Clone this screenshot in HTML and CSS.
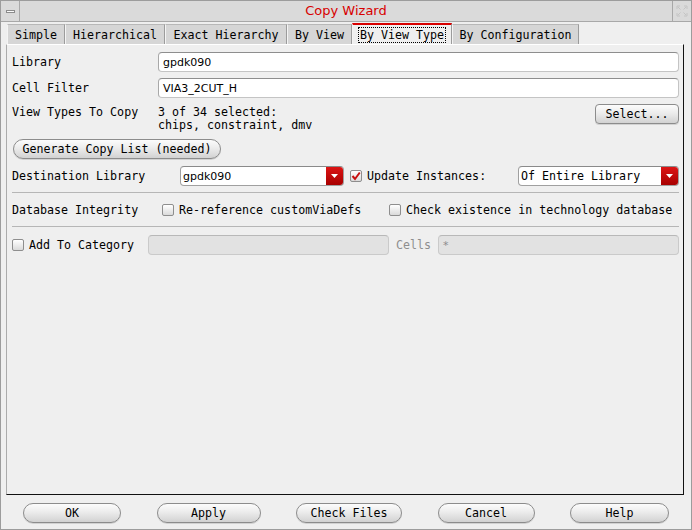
FILE: index.html
```html
<!DOCTYPE html>
<html>
<head>
<meta charset="utf-8">
<link rel="stylesheet" href="styles.css">
</head>
<body>
<div class="win">
  <div class="titlebar">
    <div class="tb-btn left"><span class="dash"></span></div>
    <div class="title">Copy Wizard</div>
    <div class="tb-btn right">
      <svg width="12" height="12" viewBox="0 0 12 12" fill="none" stroke="#c4c4c4" stroke-width="1">
        <path d="M1 4V1H4M8 1H11V4M11 8V11H8M4 11H1V8M2 2L4.5 4.5M10 2L7.5 4.5M10 10L7.5 7.5M2 10L4.5 7.5"/>
      </svg>
    </div>
  </div>
  <div class="tabs">
    <div class="tab t1">Simple</div>
    <div class="tab t2">Hierarchical</div>
    <div class="tab t3">Exact Hierarchy</div>
    <div class="tab t4">By View</div>
    <div class="tab t5 sel"><span class="focus">By View Type</span></div>
    <div class="tab t6">By Configuration</div>
  </div>
  <div class="panel">
    <div class="row">
      <span class="lbl w146">Library</span>
      <div class="field grow">gpdk090</div>
    </div>
    <div class="row mt6">
      <span class="lbl w146">Cell Filter</span>
      <div class="field grow">VIA3_2CUT_H</div>
    </div>
    <div class="row top mt6">
      <span class="lbl w146 two">View Types To Copy</span>
      <div class="info two">3 of 34 selected:<br>chips, constraint, dmv</div>
      <div class="btn square select">Select...</div>
    </div>
    <div class="row mt7">
      <div class="btn pill gen">Generate Copy List (needed)</div>
    </div>
    <div class="row mt7">
      <span class="lbl w168">Destination Library</span>
      <div class="combo c1"><span class="val prop">gpdk090</span><span class="arrow"><svg width="7" height="4" viewBox="0 0 7 4"><path d="M0 0H7L3.5 4Z" fill="#fff"/></svg></span></div>
      <span class="cb checked upd"><svg width="10" height="10" viewBox="0 0 10 10"><path d="M1.5 5L4 8L8.8 1.5" fill="none" stroke="#c81010" stroke-width="2"/></svg></span>
      <span class="cbtext">Update Instances:</span>
      <div class="combo c2"><span class="val">Of Entire Library</span><span class="arrow"><svg width="7" height="4" viewBox="0 0 7 4"><path d="M0 0H7L3.5 4Z" fill="#fff"/></svg></span></div>
    </div>
    <div class="sep s1"></div>
    <div class="row mt10 h14">
      <span class="lbl w150">Database Integrity</span>
      <div class="cbgroup g1"><span class="cb"></span><span class="cbtext">Re-reference customViaDefs</span></div>
      <div class="cbgroup"><span class="cb"></span><span class="cbtext">Check existence in technology database</span></div>
    </div>
    <div class="sep s2"></div>
    <div class="row mt8">
      <div class="cbgroup g2"><span class="cb"></span><span class="cbtext">Add To Category</span></div>
      <div class="field disabled cat"></div>
      <span class="cells">Cells</span>
      <div class="field disabled grow star">*</div>
    </div>
  </div>
  <div class="footer">
    <div class="btn pill b-ok">OK</div>
    <div class="btn pill b-apply">Apply</div>
    <div class="btn pill b-check">Check Files</div>
    <div class="btn pill b-cancel">Cancel</div>
    <div class="btn pill b-help">Help</div>
  </div>
</div>
</body>
</html>
```
FILE: styles.css
```css
html, body {
  margin: 0;
  padding: 0;
  background: #efefef;
}

.win {
  width: 692px;
  height: 530px;
  box-sizing: border-box;
  border: 1px solid #9c9c9c;
  background: #efefef;
  display: flex;
  flex-direction: column;
  font-family: "DejaVu Sans Mono", monospace;
  font-size: 11.65px;
  color: #000;
}

/* title bar */
.titlebar {
  height: 20px;
  flex-shrink: 0;
  display: flex;
  background: #dadada;
  border-bottom: 1px solid #a8a8a8;
}
.tb-btn {
  width: 18px;
  display: flex;
  align-items: center;
  justify-content: center;
}
.tb-btn.left { border-right: 1px solid #a8a8a8; }
.tb-btn.right { border-left: 1px solid #a8a8a8; }
.dash {
  width: 7px;
  height: 1px;
  background: #fbfbfb;
  border: 1px solid #8c8c8c;
}
.title {
  flex: 1;
  text-align: center;
  color: #d80000;
  font-family: "DejaVu Sans", sans-serif;
  font-size: 13px;
  line-height: 20px;
}

/* tabs */
.tabs {
  height: 22px;
  flex-shrink: 0;
  display: flex;
  align-items: flex-end;
  padding-left: 6px;
}
.tab {
  box-sizing: border-box;
  height: 20px;
  background: #d6d6d6;
  border-top: 1px solid #b8b8b8;
  border-left: 1px solid #f4f4f4;
  border-right: 1px solid #9c9c9c;
  text-align: center;
  padding-top: 2px;
  line-height: 17px;
  white-space: nowrap;
}
.t1 { width: 58px; }
.t2 { width: 100px; }
.t3 { width: 122px; }
.t4 { width: 65px; }
.t5 { width: 100px; }
.t6 { width: 127px; }
.tab.sel {
  height: 21px;
  background: #efefef;
  border-top: 2px solid #d80000;
  padding-top: 2px;
  line-height: 17px;
}
.focus {
  outline: 1px dotted #000;
  outline-offset: 0;
  padding: 0 1px;
}

/* panel */
.panel {
  flex: 1;
  box-sizing: border-box;
  width: 678px;
  margin-left: 5px;
  border-top: 1px solid #ffffff;
  border-left: 1px solid #ababab;
  border-right: 1px solid #111;
  border-bottom: 1px solid #111;
  padding: 7px 4px 0 5px;
  display: flex;
  flex-direction: column;
}

.row {
  display: flex;
  align-items: center;
  white-space: nowrap;
}
.row.top { align-items: flex-start; }
.mt6 { margin-top: 6px; }
.mt7 { margin-top: 7px; }
.mt8 { margin-top: 8px; }
.mt10 { margin-top: 10px; }
.h14 { height: 14px; }

.lbl { flex-shrink: 0; }
.w146 { width: 146px; }
.w150 { width: 150px; }
.w168 { width: 168px; }
.grow { flex: 1; }

.two {
  padding-top: 2px;
  line-height: 13px;
}
.info { flex: 1; }

.field {
  box-sizing: border-box;
  height: 20px;
  background: #fff;
  border: 1px solid #c4c4c4;
  border-top-color: #8e8e8e;
  border-left-color: #a8a8a8;
  border-radius: 4px;
  font-family: "DejaVu Sans", sans-serif;
  font-size: 11px;
  padding-left: 4px;
  display: flex;
  align-items: center;
}
.field.disabled {
  background: #e2e2e2;
  border-color: #cacaca;
  border-top-color: #b8b8b8;
  color: #8c8c8c;
}
.cat {
  width: 241px;
}
.star {
  margin-left: 7px;
}
.cells {
  margin-left: 7px;
  color: #8e8e8e;
}

/* buttons */
.btn {
  box-sizing: border-box;
  height: 20px;
  border: 1px solid #8c8c8c;
  background: linear-gradient(#fcfcfc, #ececec 45%, #d2d2d2);
  display: flex;
  align-items: center;
  justify-content: center;
  box-shadow: 0 1px 0 rgba(0, 0, 0, 0.12);
  white-space: nowrap;
}
.btn.pill { border-radius: 10px; }
.btn.square { border-radius: 4px; }
.select { width: 84px; }
.gen { width: 208px; margin-left: 1px; }

/* combo */
.combo {
  box-sizing: border-box;
  height: 20px;
  display: flex;
  background: #fff;
  border: 1px solid #a0a0a0;
  border-top-color: #8a8a8a;
  border-radius: 4px;
  overflow: hidden;
}
.c1 { width: 164px; }
.c2 { width: 161px; margin-left: auto; }
.val {
  flex: 1;
  padding-left: 2px;
  display: flex;
  align-items: center;
}
.val.prop {
  font-family: "DejaVu Sans", sans-serif;
  font-size: 11px;
}
.arrow {
  width: 17px;
  background: linear-gradient(#dc1414, #a80000);
  display: flex;
  align-items: center;
  justify-content: center;
}

/* checkboxes */
.cb {
  box-sizing: border-box;
  width: 12px;
  height: 12px;
  flex-shrink: 0;
  border: 1px solid #8e8e8e;
  border-radius: 2px;
  background: linear-gradient(#ffffff, #dadada);
  display: flex;
  align-items: center;
  justify-content: center;
}
.upd { margin-left: 6px; }
.cbtext { margin-left: 5px; }
.cbgroup {
  display: flex;
  align-items: center;
}
.g1 { width: 227px; }
.g2 { width: 136px; }

.sep {
  height: 1px;
  background: #b6b6b6;
}
.s1 { margin-top: 6px; }
.s2 { margin-top: 9px; }

/* footer */
.footer {
  height: 34px;
  flex-shrink: 0;
  box-sizing: border-box;
  padding: 8px 22px 0 22px;
  display: flex;
  justify-content: space-between;
  align-items: flex-start;
}
.b-ok { width: 98px; }
.b-apply { width: 104px; }
.b-check { width: 106px; }
.b-cancel { width: 97px; }
.b-help { width: 99px; }
```
